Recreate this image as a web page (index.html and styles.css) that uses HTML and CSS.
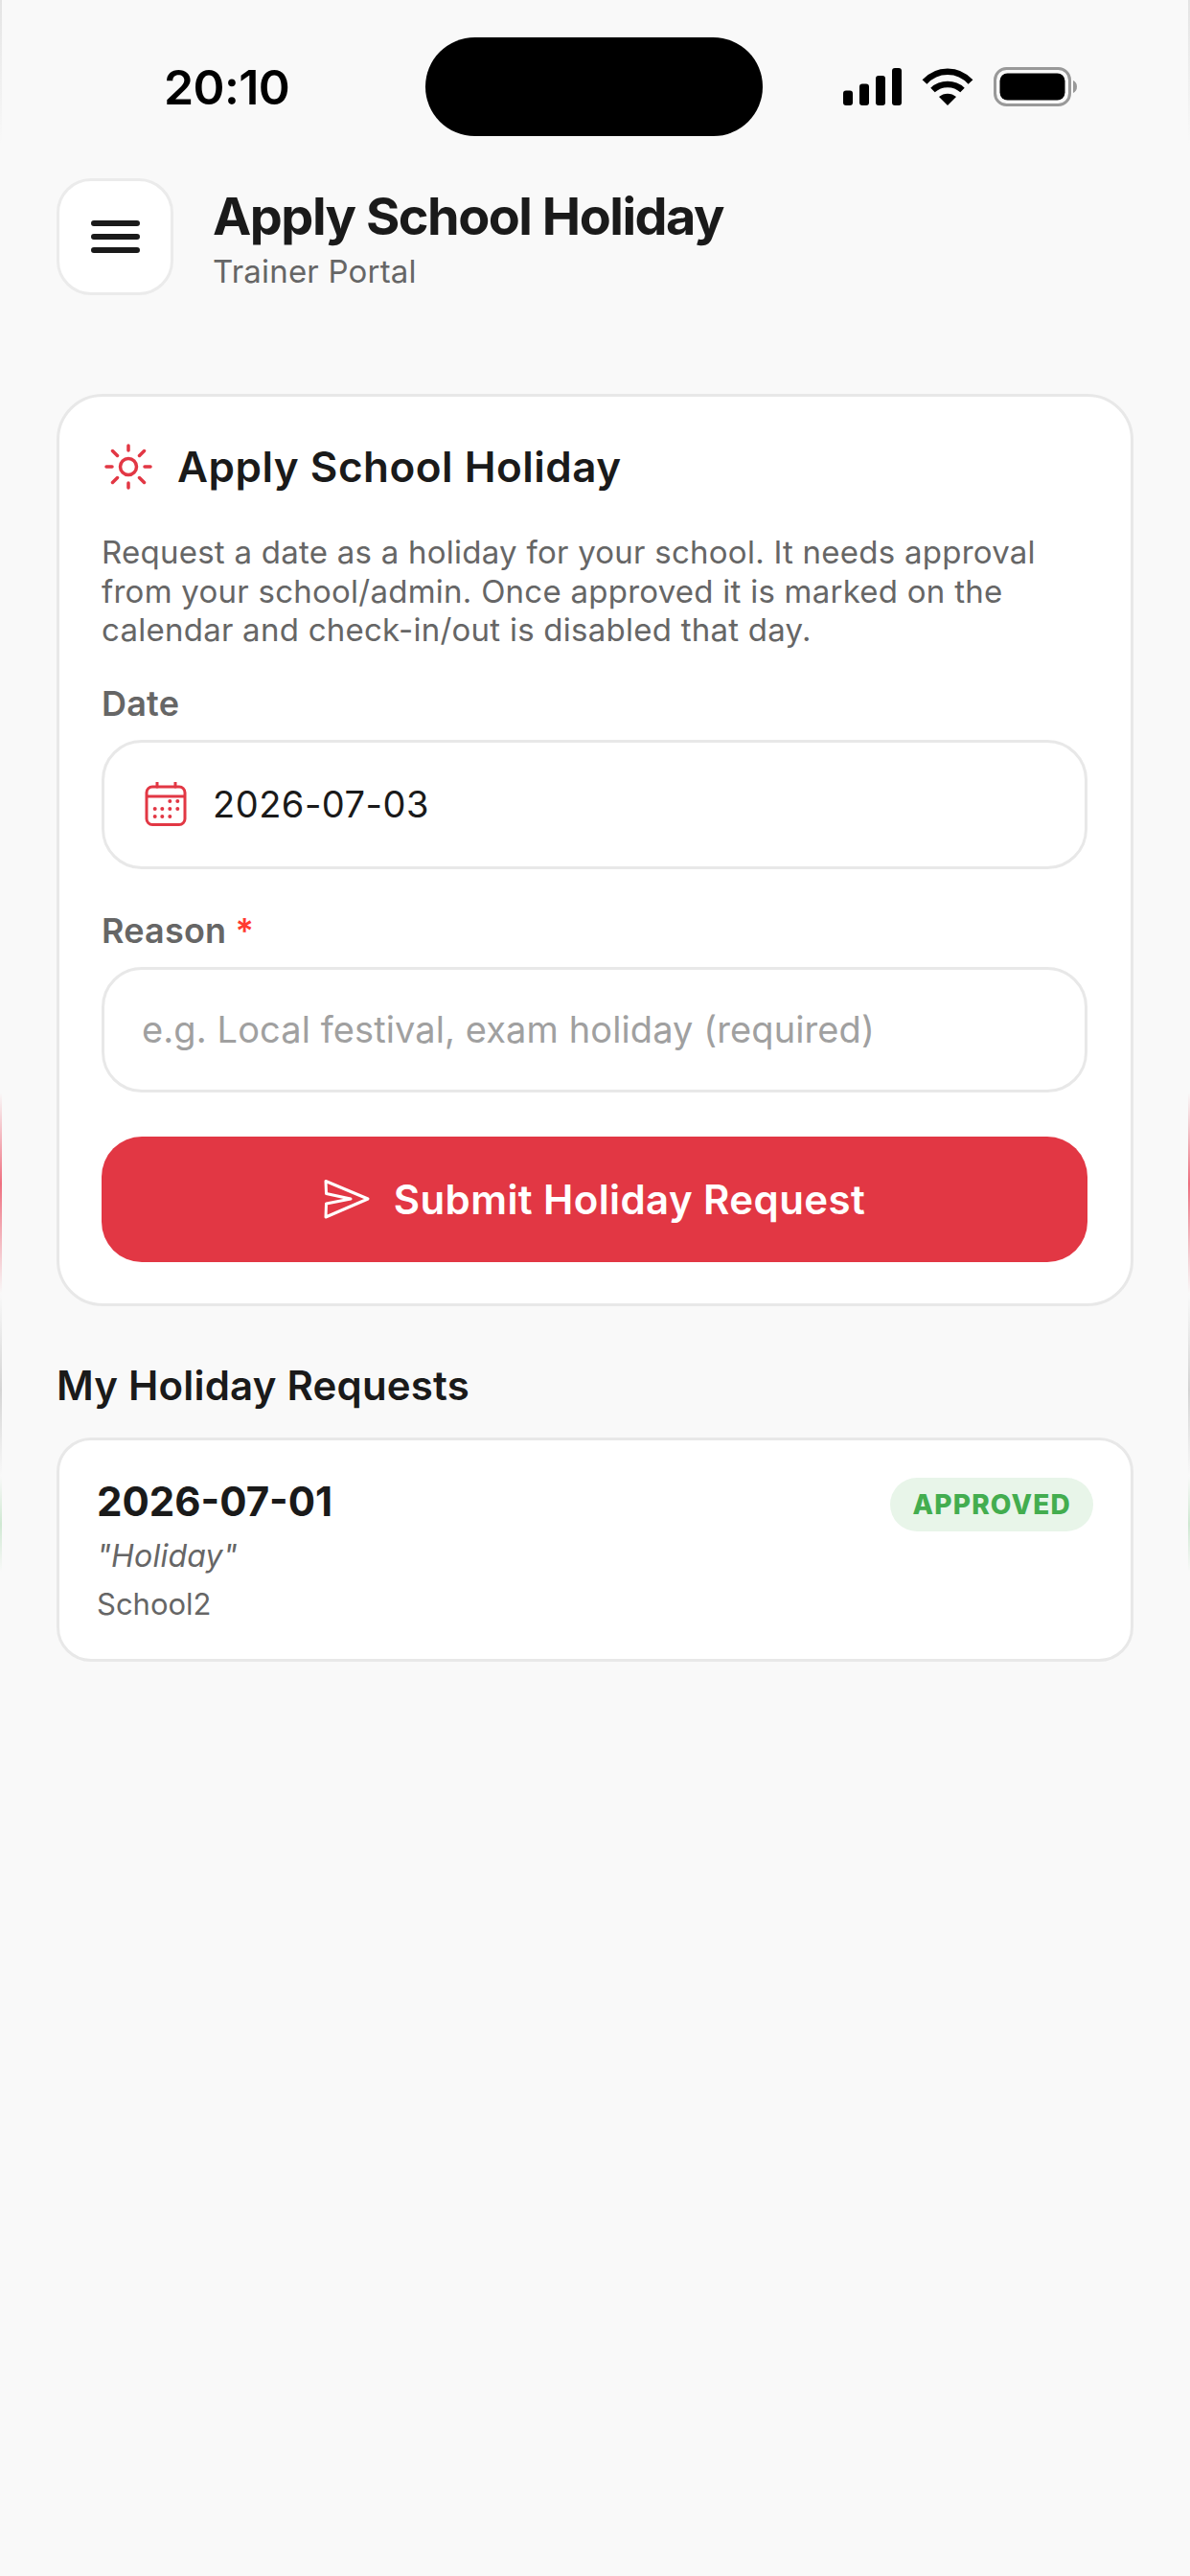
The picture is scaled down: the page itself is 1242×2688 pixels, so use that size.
FILE: index.html
```html
<!DOCTYPE html>
<html>
<head>
  <title>Apply School Holiday</title>
  <link rel="stylesheet" href="styles.css">
</head>
<body>
  <div class="edge edge-left"></div>
  <div class="edge edge-right"></div>

  <div class="status-bar">
    <div class="time">20:10</div>
    <div class="island"></div>
    <div class="status-icons">
      <svg width="61" height="39" viewBox="0 0 61 39">
        <rect x="0" y="23.5" width="10" height="15.5" rx="3"/>
        <rect x="17" y="16.5" width="10" height="22.5" rx="3"/>
        <rect x="34" y="8" width="10" height="31" rx="3"/>
        <rect x="51" y="0" width="10" height="39" rx="3"/>
      </svg>
      <svg width="54" height="39" viewBox="0 0 54 39">
        <path d="M3 14.5C16 0 38 0 51 14.5" fill="none" stroke="#000" stroke-width="6.5"/>
        <path d="M11.5 23C20 15 34 15 42.5 23" fill="none" stroke="#000" stroke-width="6.5"/>
        <path d="M27 39L18 30C23 25.5 31 25.5 36 30Z"/>
      </svg>
      <svg width="87" height="41" viewBox="0 0 87 41">
        <rect x="1.5" y="1.5" width="78" height="38" rx="12" fill="none" stroke="#999" stroke-width="3"/>
        <rect x="6.5" y="6.5" width="68" height="28" rx="8"/>
        <path d="M83 14C85.500 15 87 17.500 87 20.500C87 23.500 85.500 26 83 27Z" fill="#999"/>
      </svg>
    </div>
  </div>

  <div class="header">
    <button class="menu-btn">
      <svg width="51" height="34" viewBox="0 0 51 34">
        <path d="M3 3H48M3 17H48M3 31H48" fill="none" stroke="#1a1a1a" stroke-width="6" stroke-linecap="round"/>
      </svg>
    </button>
    <div class="header-text">
      <h1>Apply School Holiday</h1>
      <div class="subtitle">Trainer Portal</div>
    </div>
  </div>

  <div class="card form-card">
    <div class="card-title">
      <svg class="sun-icon" width="50" height="50" viewBox="0 0 50 50">
        <g fill="none" stroke="#e23744" stroke-width="3.500" stroke-linecap="round">
          <circle cx="25" cy="25" r="8.500"/>
          <path d="M25 3V8M25 42V47M2 25H8M42 25H48M8.500 8.500L13.500 13.500M36.500 36.500L41.500 41.500M8.500 41.500L13.500 36.500M36.500 13.500L41.500 8.500"/>
        </g>
      </svg>
      <h2>Apply School Holiday</h2>
    </div>
    <p class="desc">Request a date as a holiday for your school. It needs approval from your school/admin. Once approved it is marked on the calendar and check-in/out is disabled that day.</p>

    <div class="label date-label">Date</div>
    <div class="field date-field">
      <svg width="46" height="46" viewBox="0 0 46 46">
        <g fill="none" stroke="#e23744" stroke-width="3">
          <rect x="3" y="5" width="40" height="39.500" rx="6"/>
          <path d="M3 15H43"/>
          <path d="M14 0.500V5M33 0.500V5" stroke-linecap="round"/>
        </g>
        <g fill="#e23744">
          <circle cx="27.300" cy="20" r="2"/><circle cx="35.300" cy="20" r="2"/>
          <circle cx="11.700" cy="28" r="2"/><circle cx="19.300" cy="28" r="2"/><circle cx="27.300" cy="28" r="2"/><circle cx="35.300" cy="28" r="2"/>
          <circle cx="11.700" cy="36" r="2"/><circle cx="19.300" cy="36" r="2"/><circle cx="27.300" cy="36" r="2"/>
        </g>
      </svg>
      <span>2026-07-03</span>
    </div>

    <div class="label reason-label">Reason <span class="required">*</span></div>
    <div class="field reason-field">e.g. Local festival, exam holiday (required)</div>

    <button class="submit-btn">
      <svg width="48" height="42" viewBox="0 0 48 42">
        <path d="M2 2.500L46 21L2 40L2.500 26L28 21L2.500 15.500Z" fill="none" stroke="#fff" stroke-width="3" stroke-linejoin="round"/>
      </svg>
      <span>Submit Holiday Request</span>
    </button>
  </div>

  <h3 class="section-title">My Holiday Requests</h3>

  <div class="card request-card">
    <div class="request-top">
      <div class="request-date">2026-07-01</div>
      <div class="badge">APPROVED</div>
    </div>
    <div class="request-reason">"Holiday"</div>
    <div class="request-school">School2</div>
  </div>
</body>
</html>
```

FILE: styles.css
```css
body {
  position: relative;
  width: 1242px;
  height: 2688px;
  margin: 0;
  overflow: hidden;
  background-color: #f9f9f9;
  font-family: Inter, "Liberation Sans", sans-serif;
  color: #1a1a1a;
}
button {
  font-family: inherit;
  border: none;
  padding: 0;
}
h1, h2, h3, p {
  margin: 0;
}

/* faint reflection along the screen edges */
.edge {
  position: absolute;
  top: 0;
  width: 2px;
  height: 2688px;
  background-image: linear-gradient(to bottom,
    #e4e4e4 0, #f9f9f9 150px,
    #f9f9f9 1140px, #ee7080 1235px, #f9f9f9 1350px,
    #d4d4d4 1450px, #f9f9f9 1540px,
    #cfe8d2 1590px, #f9f9f9 1640px, #f9f9f9 2688px);
}
.edge-left {
  left: 0;
}
.edge-right {
  right: 0;
}

.status-bar {
  display: flex;
  align-items: center;
  padding: 39px 0 0 171px;
}
.time {
  width: 273px;
  font-size: 50px;
  font-weight: 600;
  letter-spacing: -0.600px;
  line-height: 60px;
  color: #000;
}
.island {
  width: 352px;
  height: 103px;
  border-radius: 52px;
  background-color: #000;
}
.status-icons {
  display: flex;
  align-items: center;
  gap: 21px;
  margin-left: 84px;
}

.header {
  display: flex;
  gap: 41px;
  margin-top: 44px;
  padding: 0 59px;
}
.menu-btn {
  display: flex;
  align-items: center;
  justify-content: center;
  box-sizing: border-box;
  width: 122px;
  height: 122px;
  border: 3px solid #ebebeb;
  border-radius: 36px;
  background-color: #fff;
}
.header-text {
  padding-top: 9px;
}
h1 {
  font-size: 54px;
  font-weight: 700;
  line-height: 62px;
  letter-spacing: -1.500px;
}
.subtitle {
  margin-top: 6px;
  font-size: 33px;
  line-height: 40px;
  letter-spacing: 0.200px;
  color: #666;
}

.card {
  box-sizing: border-box;
  width: 1124px;
  margin-left: 59px;
  border: 3px solid #e8e8e8;
  background-color: #fff;
}
.form-card {
  margin-top: 103px;
  padding: 46px 45px 43px 44px;
  border-radius: 48px;
}
.card-title {
  display: flex;
  align-items: center;
  gap: 26px;
  height: 54px;
}
.sun-icon {
  margin-left: 3px;
}
h2 {
  font-size: 44px;
  font-weight: 600;
  line-height: 54px;
  letter-spacing: 0.500px;
}
.desc {
  margin-top: 42px;
  font-size: 33px;
  line-height: 40.5px;
  letter-spacing: 0.250px;
  color: #666;
}
.label {
  font-size: 36px;
  font-weight: 600;
  line-height: 40px;
  letter-spacing: 0.200px;
  color: #666;
}
.date-label {
  margin-top: 36px;
}
.reason-label {
  margin-top: 44px;
}
.required {
  color: #ff3b30;
}
.field {
  display: flex;
  align-items: center;
  box-sizing: border-box;
  margin-top: 18px;
  border: 3px solid #e8e8e8;
  border-radius: 42px;
  font-size: 38px;
}
.date-field {
  gap: 26px;
  height: 135px;
  padding-left: 41px;
  letter-spacing: 0.500px;
}
.reason-field {
  height: 131px;
  padding-left: 39px;
  letter-spacing: 0.100px;
  color: #a0a0a0;
}
.submit-btn {
  display: flex;
  align-items: center;
  justify-content: center;
  gap: 25px;
  width: 100%;
  height: 131px;
  margin-top: 46px;
  border-radius: 42px;
  background-color: #e23744;
  color: #fff;
  font-size: 42px;
  font-weight: 600;
  letter-spacing: 0.400px;
}

.section-title {
  margin: 59px 0 0 59px;
  font-size: 42px;
  font-weight: 600;
  line-height: 48px;
  letter-spacing: 0.200px;
}

.request-card {
  height: 234px;
  margin-top: 30px;
  padding: 39px 39px 0 39px;
  border-radius: 36px;
}
.request-top {
  display: flex;
  justify-content: space-between;
  align-items: flex-start;
}
.request-date {
  font-size: 42px;
  font-weight: 700;
  line-height: 50px;
}
.badge {
  padding: 0 23px;
  border-radius: 28px;
  background-color: #e8f5e9;
  color: #43ad4f;
  font-size: 28px;
  font-weight: 800;
  line-height: 56px;
  letter-spacing: 1.200px;
}
.request-reason {
  margin-top: 6px;
  font-size: 32px;
  font-style: italic;
  line-height: 40px;
  letter-spacing: 0.200px;
  color: #666;
}
.request-school {
  margin-top: 11px;
  font-size: 31px;
  line-height: 38px;
  color: #666;
}
```
